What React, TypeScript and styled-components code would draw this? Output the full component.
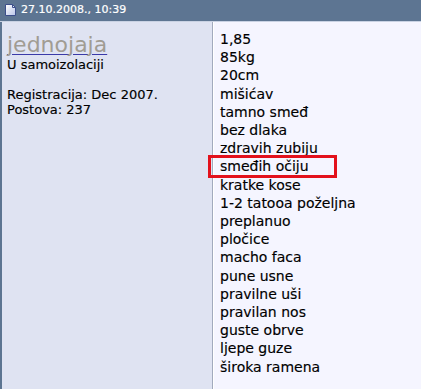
import styled, { createGlobalStyle } from 'styled-components';

const GlobalStyle = createGlobalStyle`
	html, body {
		margin: 0;
		padding: 0;
		background: #f5f5ff;
		overflow: hidden;
	}
	body {
		font-family: 'DejaVu Sans', Verdana, sans-serif;
	}
`;

const details = [
	'1,85',
	'85kg',
	'20cm',
	'mišićav',
	'tamno smeđ',
	'bez dlaka',
	'zdravih zubiju',
	'smeđih očiju',
	'kratke kose',
	'1-2 tatooa poželjna',
	'preplanuo',
	'pločice',
	'macho faca',
	'pune usne',
	'pravilne uši',
	'pravilan nos',
	'guste obrve',
	'ljepe guze',
	'široka ramena',
];

const highlighted = 'smeđih očiju';

export default function App() {
	return (
		<>
			<GlobalStyle />
			<Post>
				<Header>
					<PostIcon />
					<span>27.10.2008., 10:39</span>
				</Header>
				<Body>
					<UserInfo>
						<Username href='#'>jednojaja</Username>
						<UserTitle>U samoizolaciji</UserTitle>
						<Meta>
							<div>Registracija: Dec 2007.</div>
							<div>Postova: 237</div>
						</Meta>
					</UserInfo>
					<Message>
						{details.map((line) => (
							<Line key={line}>
								{line}
								{line === highlighted && <Highlight />}
							</Line>
						))}
					</Message>
				</Body>
			</Post>
		</>
	);
}

function PostIcon() {
	return (
		<svg width='11' height='12' viewBox='0 0 11 12'>
			<defs>
				<linearGradient id='doc' x1='0' y1='0' x2='1' y2='1'>
					<stop offset='0' stopColor='#ffffff' />
					<stop offset='1' stopColor='#b8c4e8' />
				</linearGradient>
			</defs>
			<path d='M0.5 0.5 H7.5 L10.5 3.5 V11.5 H0.5 Z' fill='url(#doc)' stroke='#3c4f8a' />
			<path d='M7.5 0.5 V3.5 H10.5' fill='none' stroke='#3c4f8a' />
		</svg>
	);
}

const Post = styled.div`
	width: 421px;
	height: 389px;
	display: flex;
	flex-direction: column;
`;

const Header = styled.div`
	display: flex;
	align-items: center;
	gap: 5px;
	height: 22px;
	padding: 0 0 2px 5px;
	box-sizing: border-box;
	background: #5d7592;
	border-bottom: 1px solid #c9d2e3;
	color: #ffffff;
	font-size: 11px;
	-webkit-text-stroke: 0.2px #ffffff;
`;

const Body = styled.div`
	flex: 1;
	display: grid;
	grid-template-columns: 213px 1fr;
`;

const UserInfo = styled.div`
	background: #dfe3f2;
	border-left: 2px solid #5d7592;
	border-right: 1px solid #a2aabd;
	padding: 10px 5px;
	font-size: 13px;
	line-height: 15px;
	color: #000000;
	-webkit-text-stroke: 0.15px #000000;
`;

const Username = styled.a`
	display: block;
	font-size: 22px;
	line-height: 26px;
	color: #a19c93;
	-webkit-text-stroke: 0;
	text-decoration: underline;
	text-decoration-color: #3a3aa8;
	text-decoration-thickness: 1px;
	text-underline-offset: 2px;
`;

const UserTitle = styled.div`
	margin-top: -1px;
`;

const Meta = styled.div`
	margin-top: 15px;
`;

const Message = styled.div`
	border-left: 1px solid #ffffff;
	padding: 8px 6px;
	font-size: 14px;
	line-height: 18.2px;
	color: #000000;
	-webkit-text-stroke: 0.15px #000000;
`;

const Line = styled.div`
	position: relative;
`;

const Highlight = styled.span`
	position: absolute;
	left: -12px;
	top: -2px;
	width: 129px;
	height: 23px;
	border: 3px solid #e3111c;
	box-sizing: border-box;
`;
